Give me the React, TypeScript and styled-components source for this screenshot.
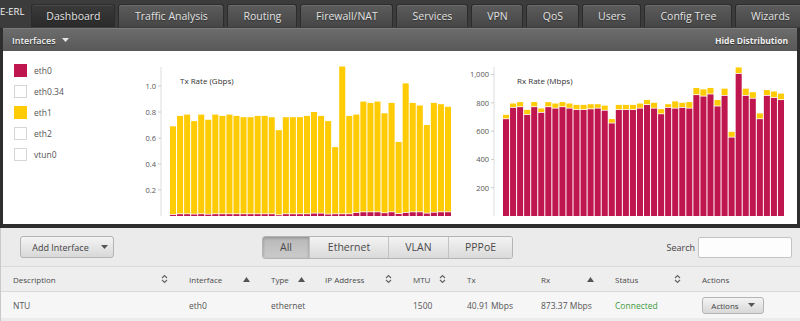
import React from "react";
import styled, { createGlobalStyle } from "styled-components";

const colors = {
  crimson: "#c0164f",
  yellow: "#ffcb05",
  navBg: "#3c3c3c",
  text: "#4a4a4a",
  line: "#d9d9d9",
};

const GlobalStyle = createGlobalStyle`
  html, body {
    margin: 0;
    padding: 0;
    background: #ebebeb;
    font-family: "Open Sans", "Liberation Sans", sans-serif;
  }
  * { box-sizing: border-box; }
`;

const tabs = [
  { label: "Dashboard", width: 84 },
  { label: "Traffic Analysis", width: 106 },
  { label: "Routing", width: 70 },
  { label: "Firewall/NAT", width: 93 },
  { label: "Services", width: 72 },
  { label: "VPN", width: 52 },
  { label: "QoS", width: 53 },
  { label: "Users", width: 59 },
  { label: "Config Tree", width: 88 },
  { label: "Wizards", width: 70 },
];

const legend = [
  { label: "eth0", color: colors.crimson },
  { label: "eth0.34", color: "" },
  { label: "eth1", color: colors.yellow },
  { label: "eth2", color: "" },
  { label: "vtun0", color: "" },
];

const txTotal = [
  0.69, 0.77, 0.78, 0.73, 0.78, 0.74, 0.78, 0.77, 0.78, 0.77, 0.76, 0.76, 0.77,
  0.77, 0.76, 0.66, 0.76, 0.76, 0.76, 0.77, 0.8, 0.77, 0.73, 0.53, 1.15, 0.77,
  0.78, 0.88, 0.87, 0.88, 0.79, 0.87, 0.57, 1.02, 0.87, 0.85, 0.7, 0.87, 0.86,
  0.84,
];
const txEth0 = [
  0.015, 0.02, 0.02, 0.018, 0.02, 0.017, 0.02, 0.02, 0.02, 0.02, 0.02, 0.02,
  0.02, 0.02, 0.02, 0.012, 0.02, 0.02, 0.02, 0.02, 0.025, 0.025, 0.018, 0.02,
  0.02, 0.02, 0.03, 0.035, 0.035, 0.035, 0.028, 0.035, 0.022, 0.03, 0.035,
  0.035, 0.025, 0.032, 0.035, 0.035,
];
const rxTotal = [
  715, 795, 805, 750, 805, 760, 805, 795, 805, 795, 785, 785, 790, 790, 780,
  685, 785, 785, 785, 795, 820, 800, 755, 790, 810, 800, 805, 905, 895, 905,
  820, 900, 595, 1050, 900, 875, 725, 890, 880, 865,
];
const rxEth0 = [
  690, 770, 775, 720, 775, 735, 775, 765, 775, 765, 755, 755, 760, 765, 750,
  660, 755, 755, 755, 765, 790, 765, 725, 770, 765, 770, 765, 860, 850, 865,
  780, 855, 560, 1010, 855, 835, 690, 855, 840, 825,
];

const Page = styled.div`
  width: 800px;
  height: 321px;
  overflow: hidden;
  display: flex;
  flex-direction: column;
`;

const Nav = styled.div`
  height: 28px;
  background: ${colors.navBg};
  display: flex;
  align-items: flex-end;
  gap: 3px;
  overflow: hidden;
  flex-shrink: 0;
`;

const Brand = styled.div`
  align-self: flex-start;
  width: 29px;
  height: 24px;
  padding-right: 4px;
  line-height: 24px;
  color: #f2f2f2;
  font-size: 9.5px;
  white-space: nowrap;
  display: flex;
  justify-content: flex-end;
`;

const Tab = styled.div<{ $w: number; $active?: boolean }>`
  flex: 0 0 ${(p) => p.$w}px;
  height: 23px;
  margin-bottom: 1px;
  border-radius: 3px 3px 0 0;
  border: 1px solid #2c2c2c;
  border-bottom: none;
  background: ${(p) =>
    p.$active
      ? "linear-gradient(#3a3a3a, #2b2b2b)"
      : "linear-gradient(#5c5c5c, #464646)"};
  box-shadow: inset 0 1px 0 ${(p) => (p.$active ? "#4a4a4a" : "#6c6c6c")};
  color: #e2e2e2;
  font-size: 10.5px;
  display: flex;
  align-items: center;
  justify-content: center;
  white-space: nowrap;
  text-shadow: 0 1px 1px rgba(0, 0, 0, 0.4);
`;

const Panel = styled.div`
  background: #2e2e2e;
  padding: 0 3px 4px 3px;
  display: flex;
  flex-direction: column;
  flex-shrink: 0;
`;

const PanelHeader = styled.div`
  height: 23px;
  background: linear-gradient(#6c6c6c, #585858);
  border-top: 1px solid #7a7a7a;
  display: flex;
  align-items: center;
  justify-content: space-between;
  padding: 0 9px 0 9px;
  color: #f0f0f0;
  font-size: 9px;
  font-weight: 600;
  text-shadow: 0 1px 1px rgba(0, 0, 0, 0.5);
`;

const HeaderTitle = styled.div`
  display: flex;
  align-items: center;
  gap: 6px;
`;

const HeaderLink = styled.div`
  font-weight: 700;
  font-size: 8.5px;
`;

const PanelBody = styled.div`
  height: 173px;
  background: #fff;
  display: flex;
`;

const Legend = styled.div`
  width: 127px;
  padding: 13px 0 0 11px;
  display: flex;
  flex-direction: column;
  gap: 8px;
`;

const LegendItem = styled.div`
  display: flex;
  align-items: center;
  gap: 7px;
  height: 13px;
  font-size: 8.5px;
  color: #555;
`;

const Swatch = styled.span<{ $color: string }>`
  width: 13px;
  height: 13px;
  background: ${(p) => p.$color || "#fff"};
  border: 1px solid ${(p) => (p.$color ? p.$color : "#d6d6d6")};
`;

const Lower = styled.div`
  flex: 1;
  background: #ebebeb;
  border-left: 1px solid #c9c9c9;
  display: flex;
  flex-direction: column;
`;

const Toolbar = styled.div`
  height: 39px;
  display: flex;
  align-items: center;
  padding: 0 8px 0 19px;
  border-bottom: 1px solid ${colors.line};
`;

const Button = styled.button<{ $small?: boolean }>`
  font-family: inherit;
  height: ${(p) => (p.$small ? 17 : 22)}px;
  width: ${(p) => (p.$small ? 62 : 94)}px;
  padding: ${(p) => (p.$small ? "0" : "0 0 0 6px")};
  border: 1px solid #b4b4b4;
  border-radius: 3px;
  background: linear-gradient(#f4f4f4, #d8d8d8);
  color: #444;
  font-size: ${(p) => (p.$small ? 8 : 9)}px;
  white-space: nowrap;
  display: flex;
  align-items: center;
  justify-content: center;
  gap: ${(p) => (p.$small ? 9 : 12)}px;
  cursor: pointer;
`;

const Segments = styled.div`
  display: flex;
  margin-left: 148px;
  border: 1px solid #b4b4b4;
  border-radius: 3px;
  overflow: hidden;
  height: 23px;
`;

const Segment = styled.div<{ $w: number; $active?: boolean }>`
  width: ${(p) => p.$w}px;
  display: flex;
  align-items: center;
  justify-content: center;
  font-size: 10.5px;
  color: #4a4a4a;
  background: ${(p) =>
    p.$active
      ? "linear-gradient(#b8b8b8, #cbcbcb)"
      : "linear-gradient(#f3f3f3, #dadada)"};
  box-shadow: ${(p) =>
    p.$active ? "inset 0 1px 3px rgba(0,0,0,0.25)" : "none"};
  & + & {
    border-left: 1px solid #c2c2c2;
  }
`;

const SearchLabel = styled.label`
  margin-left: auto;
  font-size: 9px;
  color: #444;
  margin-right: 3px;
`;

const SearchInput = styled.input`
  width: 94px;
  height: 21px;
  border: 1px solid #c4c4c4;
  border-radius: 2px;
  background: #fdfdfd;
`;

const cols = "176px 82px 54px 88px 54px 74px 74px 87px 1fr";

const HeadRow = styled.div`
  display: grid;
  grid-template-columns: ${cols};
  height: 25px;
  background: #eeeeee;
  border-bottom: 1px solid ${colors.line};
`;

const HeadCell = styled.div`
  display: flex;
  align-items: center;
  justify-content: space-between;
  padding: 0 9px 0 12px;
  font-size: 8px;
  color: #4a4a4a;
`;

const HeadInline = styled.span`
  display: flex;
  align-items: center;
  gap: 9px;
`;

const DataRow = styled.div`
  display: grid;
  grid-template-columns: ${cols};
  height: 26px;
  background: #f6f6f6;
`;

const Cell = styled.div<{ $color?: string }>`
  display: flex;
  align-items: center;
  padding-left: 12px;
  font-size: 8.5px;
  color: ${(p) => p.$color || "#555"};
  white-space: nowrap;
`;

const Caret = ({ color = "#555" }: { color?: string }) => (
  <svg width="7" height="4" viewBox="0 0 7 4">
    <polygon points="0,0 7,0 3.5,4" fill={color} />
  </svg>
);

const SortBoth = () => (
  <svg width="7" height="10" viewBox="0 0 7 10">
    <path
      d="M1 4 L3.5 1.5 L6 4 M1 6 L3.5 8.5 L6 6"
      fill="none"
      stroke="#666"
      strokeWidth="1.2"
    />
  </svg>
);

const SortUp = () => (
  <svg width="7" height="5" viewBox="0 0 7 5">
    <polygon points="0,5 7,5 3.5,0" fill="#555" />
  </svg>
);

interface chartProps {
  width: number;
  axisX: number;
  title: string;
  titleX: number;
  ticks: { value: number; label: string }[];
  perUnit: number;
  total: number[];
  bottom: number[];
}

const BASE = 165;

const BarChart: React.FC<chartProps> = ({
  width,
  axisX,
  title,
  titleX,
  ticks,
  perUnit,
  total,
  bottom,
}) => {
  const step = 7.05;
  const start = axisX + 9;
  return (
    <svg width={width} height={173} viewBox={`0 0 ${width} 173`}>
      <line x1={axisX} y1={16} x2={axisX} y2={BASE} stroke="#ddd" />
      {ticks.map((t) => {
        const y = BASE - t.value * perUnit;
        return (
          <g key={t.label}>
            <line x1={axisX - 3} y1={y} x2={axisX} y2={y} stroke="#ccc" />
            <text
              x={axisX - 5}
              y={y + 2.8}
              textAnchor="end"
              fontSize="7.5"
              fill="#555"
              fontFamily="Open Sans, sans-serif"
            >
              {t.label}
            </text>
          </g>
        );
      })}
      {total.map((v, i) => {
        const x = start + i * step;
        const hTotal = v * perUnit;
        const hBottom = bottom[i] * perUnit;
        return (
          <g key={i}>
            <rect
              x={x}
              y={BASE - hTotal}
              width={step - 1}
              height={hTotal - hBottom}
              fill={colors.yellow}
            />
            <rect
              x={x}
              y={BASE - hBottom + 0.8}
              width={step - 1}
              height={hBottom - 0.8}
              fill={colors.crimson}
            />
          </g>
        );
      })}
      <text
        x={titleX}
        y={33}
        fontSize="8"
        fill="#333"
        fontFamily="Open Sans, sans-serif"
      >
        {title}
      </text>
    </svg>
  );
};

const App: React.FC = () => {
  return (
    <Page>
      <GlobalStyle />
      <Nav>
        <Brand>E-ERL</Brand>
        {tabs.map((t) => (
          <Tab key={t.label} $w={t.width} $active={t.label === "Dashboard"}>
            {t.label}
          </Tab>
        ))}
      </Nav>
      <Panel>
        <PanelHeader>
          <HeaderTitle>
            Interfaces <Caret color="#e6e6e6" />
          </HeaderTitle>
          <HeaderLink>Hide Distribution</HeaderLink>
        </PanelHeader>
        <PanelBody>
          <Legend>
            {legend.map((l) => (
              <LegendItem key={l.label}>
                <Swatch $color={l.color} />
                {l.label}
              </LegendItem>
            ))}
          </Legend>
          <BarChart
            width={330}
            axisX={31}
            title="Tx Rate (Gbps)"
            titleX={50}
            perUnit={130}
            ticks={[0.2, 0.4, 0.6, 0.8, 1.0].map((v) => ({
              value: v,
              label: v.toFixed(1),
            }))}
            total={txTotal}
            bottom={txEth0}
          />
          <BarChart
            width={337}
            axisX={34}
            title="Rx Rate (Mbps)"
            titleX={57}
            perUnit={0.1415}
            ticks={[200, 400, 600, 800, 1000].map((v) => ({
              value: v,
              label: v.toLocaleString("en-US"),
            }))}
            total={rxTotal}
            bottom={rxEth0}
          />
        </PanelBody>
      </Panel>
      <Lower>
        <Toolbar>
          <Button>
            Add Interface <Caret />
          </Button>
          <Segments>
            <Segment $w={46} $active>
              All
            </Segment>
            <Segment $w={79}>Ethernet</Segment>
            <Segment $w={60}>VLAN</Segment>
            <Segment $w={64}>PPPoE</Segment>
          </Segments>
          <SearchLabel>Search</SearchLabel>
          <SearchInput />
        </Toolbar>
        <HeadRow>
          <HeadCell>
            Description <SortBoth />
          </HeadCell>
          <HeadCell>
            Interface <SortUp />
          </HeadCell>
          <HeadCell>
            <HeadInline>
              Type <SortUp />
            </HeadInline>
          </HeadCell>
          <HeadCell>
            IP Address <SortBoth />
          </HeadCell>
          <HeadCell>
            MTU <SortBoth />
          </HeadCell>
          <HeadCell>Tx</HeadCell>
          <HeadCell>
            Rx <SortUp />
          </HeadCell>
          <HeadCell>
            Status <SortBoth />
          </HeadCell>
          <HeadCell>Actions</HeadCell>
        </HeadRow>
        <DataRow>
          <Cell>NTU</Cell>
          <Cell>eth0</Cell>
          <Cell>ethernet</Cell>
          <Cell />
          <Cell>1500</Cell>
          <Cell>40.91 Mbps</Cell>
          <Cell>873.37 Mbps</Cell>
          <Cell $color="#3f9a3f">Connected</Cell>
          <Cell>
            <Button $small>
              Actions <Caret />
            </Button>
          </Cell>
        </DataRow>
      </Lower>
    </Page>
  );
};

export default App;
